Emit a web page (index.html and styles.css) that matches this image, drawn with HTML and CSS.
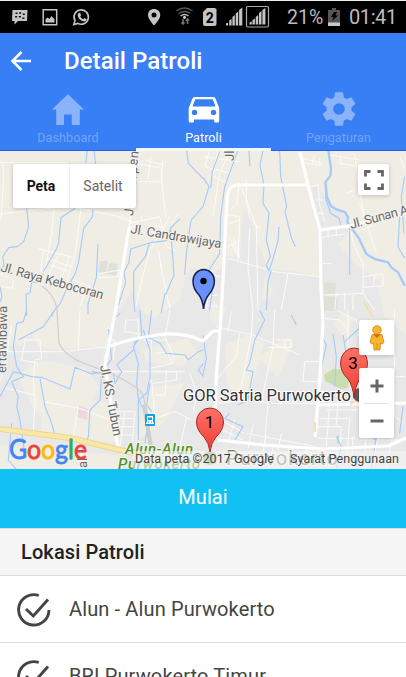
FILE: index.html
```html
<!DOCTYPE html>
<html lang="id">
<head>
<meta charset="utf-8">
<title>Detail Patroli</title>
<link rel="stylesheet" href="styles.css">
</head>
<body>
<div class="app">
  <div class="status">
    <svg class="status-icons" width="280" height="32" viewBox="0 1 280 32">
      <g fill="#c4c4c4">
        <path d="M12.500 10H27.500L27 21H18l-3.500 3.500V21H12Z"/>
        <path fill="none" stroke="#c4c4c4" stroke-width="1.500" d="M43.200 9.700h13.500v15h-13.500z"/>
        <path d="M45.500 22.500v-3l2-2 2 1.500 2-3 3 3.500v3z"/>
        <path fill="none" stroke="#c4c4c4" stroke-width="1.600" d="M73.800 24.500l1.200-3.800a7.200 7.200 0 1 1 2.800 2.700z"/>
        <path d="M78.600 13l1.500-.3 1 2.500-.9 1.200q1 2 3 2.800l1.200-1.200 2.300 1.200q-.5 2.300-2.500 2.300-5.500-1-6.500-6-.1-1.600.9-2.500z"/>
        <path fill-rule="evenodd" d="M154 9c-3.500 0-6 2.600-6 6 0 4.300 6 10.500 6 10.500s6.300-6.200 6.300-10.500c0-3.400-2.700-6-6.300-6zm0 3.500a2.500 2.500 0 1 1 0 5 2.500 2.500 0 0 1 0-5z"/>
        <path d="M207 8h8l1.500 1.500V24a2 2 0 0 1-2 2h-9.500a2 2 0 0 1-2-2V12z"/>
        <path d="M226 25.500v-2l2-1v3zm3.200 0v-5l2.400-1.500v6.500zm3.200 0V17l2.400-2v10.500zm3.300 0v-12l2.500-2v14zm3.400 0V10l3.200-2.500v18z"/>
        <path d="M249.500 24.500v-2l2.300-1v3zm3 0v-4.500l2.400-1.500v6zm3.200 0v-7.500l2.500-2v9.500zm3.300 0V13l2.500-2v13.500zm3.400 0V10l3-2v16.500z"/>
      </g>
      <g fill="#0c0c0c"><path d="M15.500 12.500h2V14h-2zm3.600-.3h2v1.500h-2zm3.700 1.300h2V15h-2zm-7.700 2.500h2v1.500h-2zm3.700 0h2v1.500h-2zm3.600 1.500h2V19h-2z"/></g>
      <rect x="246.500" y="6.500" width="22" height="20.500" rx="1.500" fill="none" stroke="#aaa" stroke-width="1.200"/>
      <g fill="none" stroke-width="1.500"><path stroke="#555" d="M176.500 11q8-6 16 0M178.500 13.500q6-4 12 0"/><path stroke="#bbb" d="M180.500 16q4-3 8 0"/><path stroke="#777" d="M183 19v5m-1.500-1.500l1.500 1.500 1.500-1.500M187.500 24v-5m-1.500 1.500l1.500-1.500 1.500 1.500"/></g>
      <circle cx="184.500" cy="17.500" r="1.400" fill="#ddd"/>
      <text x="205.700" y="22.500" class="sim">2</text>
    </svg>
    <span class="battery-text">21%</span>
    <svg class="battery" width="12" height="18" viewBox="0 0 12 18"><path fill="#555" d="M4 0h4v2h4v16H0V2h4z"/><path fill="#c8c8c8" d="M0 14.500h12V18H0z"/><path fill="#000" d="M6 4h3L7.500 7.500H10L4 13l1.500-4H3z"/></svg>
    <span class="clock">01:41</span>
  </div>
  <header class="header">
    <div class="bar">
      <svg width="22" height="20" viewBox="0 0 22 20" fill="none" stroke="#fff" stroke-width="2.500"><path d="M11.500 1L2.500 10l9 9M2.500 10H21"/></svg>
      <h1>Detail Patroli</h1>
    </div>
    <nav class="tabs">
      <a class="tab"><svg width="34" height="34" viewBox="0 0 34 34" fill="currentColor"><path d="M17 1.300L33 16.500H28.800V32H20.800V21.500H13V32H5.200V16.500H.8z"/></svg><span>Dashboard</span></a>
      <a class="tab active"><svg width="34" height="34" viewBox="0 0 34 34" fill="currentColor"><path fill-rule="evenodd" d="M7.500 4h19q1.500 0 2 1.500L32.200 15v13q0 1.500-1.300 1.500h-2.300q-1.400 0-1.400-1.500v-1.500H7V28q0 1.500-1.400 1.500H3q-1.300 0-1.300-1.500V15L5.500 5.500Q6 4 7.500 4zM8.300 6.300L5.500 13.500h23L25.700 6.300zM7.500 16.700a2.700 2.700 0 1 0 0 5.400 2.700 2.700 0 0 0 0-5.400zm19 0a2.700 2.700 0 1 0 0 5.400 2.700 2.700 0 0 0 0-5.400z"/></svg><span>Patroli</span></a>
      <a class="tab"><svg class="gear" width="40" height="40" viewBox="0 0 24 24" fill="currentColor"><path d="M19.430 12.980c.04-.32.07-.64.07-.98s-.03-.66-.07-.98l2.110-1.650c.19-.15.24-.42.12-.64l-2-3.460c-.12-.22-.39-.3-.61-.22l-2.490 1c-.52-.4-1.080-.73-1.690-.98l-.38-2.650A.49.49 0 0 0 14 2h-4c-.25 0-.46.18-.49.42l-.38 2.650c-.61.25-1.170.59-1.690.98l-2.490-1c-.23-.09-.49 0-.61.22l-2 3.460c-.13.22-.07.49.12.64l2.110 1.650c-.04.32-.07.65-.07.98s.03.66.07.98l-2.110 1.650c-.19.15-.24.42-.12.64l2 3.460c.12.22.39.3.61.22l2.490-1c.52.4 1.080.73 1.690.98l.38 2.650c.03.24.24.42.49.42h4c.25 0 .46-.18.49-.42l.38-2.650c.61-.25 1.170-.59 1.690-.98l2.490 1c.23.09.49 0 .61-.22l2-3.460c.12-.22.07-.49-.12-.64zM12 15.500a3.500 3.500 0 1 1 0-7 3.500 3.500 0 0 1 0 7z"/></svg><span>Pengaturan</span></a>
    </nav>
  </header>
  <main>
    <section class="map">
      <svg class="canvas" width="406" height="318" viewBox="0 151 406 318">
        <rect y="151" width="406" height="318" fill="#f0ede5"/>
        <!-- built-up areas -->
        <g fill="#e8e8e8">
          <path d="M186 276L194 266L206 276L222 268L225 256L240 258L243 212L250 215L258 245L268 268L290 271L319 276L318 235L311 188L317 186L330 203L348 213L350 228L338 245L354 262L380 282L384 300L406 310V469H0V342L22 345L45 312L72 315L85 345L105 350L115 315L133 290L142 312L155 318L180 300Z"/>
        </g>
        <g fill="#f0ede5">
          <path d="M22 312l75 0 9 8-3 25-40 5-25-3zM17 375l25-15 43 8 15 20-20 30-45-6zM40 410l30-12 50 5-3 40-75-10zM142 350l45-12 13 18-20 10-34-5zM150 388l34-5-20 40-30 20zM225 345l22-10 18 5-18 65-20-20zM258 357l30-20 5 8-15 33zM265 275l8 15-3 10h-8zM210 300l16 8-6 20-10-8zM333 325l8-12 11 5-5 22zM378 285l28 10v40l-22-18zM0 445l50 5 70 5v14H0z"/>
        </g>
        <path fill="#dfe1d8" d="M100 261l8 0-2 13-8-2zM109 263l9 1-2 12-9-2zM324 282l12 1-1 11h-11zM324 296l14 1v14h-14z"/>
        <path fill="#cbdcae" d="M324 375l9-6 17 1-2 18-7 1-16-8z"/>
        <path fill="#edd8df" d="M79 405l9 4-1 11-10-3z"/>
        <!-- minor roads, upper left -->
        <g transform="translate(0 150) scale(.33333)" class="minor">
          <path d="M0 192l205-24 180 38M10 40v70l-8 100M0 38h200M165 150l-10 100-22 120M246 150l-20 160-35 115M115 296l100 25M140 325l75 25M150 345l55 18M208 318l-30 90M178 310l-35 72M130 300l-8 65M410 40l75 15v40h-75M452 22l-8 66M488 30l-3 60 12 110M435 30l55 15M390 220l90-20M510 200l-60 100-20 70-25 110M480 205l20 85M465 225l30 12M500 290l28 12M480 340l30 135M475 300l10 55M355 205l60 15-25 15M425 200l0 15M535 190l-20 30M0 370l40 20-3 25-32-5M235 410l15 30-10 30M220 390l55 22M300 370l60-10-5 20-60 3"/>
        </g>
        <g transform="translate(203 150) scale(.33333)" class="minor">
          <path d="M0 20l110 15M20 0L5 50l80 20M45 0l-15 80 45 20M80 5l-30 65-20 130M115 110l45 120M108 105l-8 60-20 15M130 90l0 55 10 60 30 30M75 195l35 5-5 130M80 220l30-10M75 290l35-20M80 265l25 55M90 262l20 60M75 325l140 40 135 15M140 235l-5 120 15 125M160 230l5 250M255 370l-20 110M300 25l60 15M333 18l-5 25M350 25v20M305 40l50 5M380 15l90 15M412 12v28l62 10M455 10l15 120 20 90 30 90M432 130l20-10M325 110l20-5 5 60 15 50M340 150h20M345 190h18M350 235l85-3M355 262l70-10M375 235v28M400 230v28M470 160l20 60M480 240l30-15M445 245l5 35 30 60v90l-115 5M350 340h35M480 380l60-8 0 35-58 5M515 375l-5 38M425 430v50M450 435v45M480 430l35 50M590 20l15 40M400 430l-5 50M0 440l45-5M0 465l45 5M20 410l-10 70M50 380l-25-5"/>
        </g>
        <g transform="translate(0 310) scale(.33333)" class="minor">
          <path d="M0 125h185l140-15 0-60M240 0l-5 120M75 90h45l5 55-20 5-5 60 5 65-5 90M75 90l-10 60 50 10M20 235l85 20M35 45l-20 120-15 50M130 275l110 20 115 45M235 290l-20 120M330 185h225M320 90l25 0-5 60M345 95l-35 50M380 30h35v60M378 30l-5 35 70 10M430 90l70 0M455 80l-10 180M510 0l-15 80 30 70M470 130l30-5 20 35-70 15M470 185h60v25l-70 10M500 180l-5 75-30 0M455 210l10 110M465 325l60-20 50 25M355 305h50l-8 90M350 325h55M355 350h50M360 375h45M375 305l-15 105M560 320l-20 90 40 20M570 190l20 60-10 60M245 410l-5 70"/>
        </g>
        <g transform="translate(203 310) scale(.33333)" class="minor">
          <path d="M40 50l110 25 140 60M150 0l-5 75M85 5L75 65M110 70l-10 70-60 70M145 75l-25 130-15 65M220 90h45v22h-70M245 90v20M215 0l-5 110-35 165M360 25l50 5 25 30M435 0v110M305 155h50v60h-55zM150 265l45 15-10 120M45 325l80 45M40 350l80 40M95 330l-20 70M130 370l210 40M150 345l-15 70M190 375l-10 50M235 370l-10 50M45 280l140-15M205 280h140M335 350h80l-5 80M350 325h90l-8 110M380 280l-10 130M345 385h110M405 270l-5 75M370 300h95M450 380l-5 95M490 380l-10 95M525 385l-20 90M570 370l-20 105M470 390h135M575 0v320l30 20M575 200h31M400 0l60 30 10 60M210 410l-10 65M260 415l-20 60M310 410v65"/>
        </g>
        <!-- waterways -->
        <g transform="translate(0 150) scale(.33333)" class="water">
          <path d="M262 0l-5 40M282 0l6 55M80 175l6 55-15 45-20 15-25 3-18 28 5 25-13 15M225 175l-42 28-7 75-6 18-20 35-20 35M278 180v20l-27 35-15 100-10 35-25 45-20 45-25 30v10M294 282l-5 100-25 80v30M130 370l-10 25-25 3-5 30-12 5 2 65M0 410l6 30-6 15M560 0l5 40 44 45M609 170l-35 40-5 25-10 75-5 65M540 206l-28 28 10 140-25 60M355 467l22-70-5-30 15-30 5-40 63-20 45-5 12-35M448 280l-12 40-35 45v80l4 40M495 430l-12 60"/>
        </g>
        <g transform="translate(203 150) scale(.33333)" class="water">
          <path d="M0 170l18-60-18-28M50 5l-22 60-5 50M105 0L65 110l-12 90-3 110-50 80M138 0l3 50M180 0l-9 45 12 60-3 55 18 30-8 80 12 50-12 25 7 18 8-20 20-70 3-42M205 360l-10 35-5 85M230 0l3 80 18 90-5 15 18 75 13 30M440 235v140M590 200l-5 90 20 35M30 410l-10 70M605 80l-10 60 8 110"/>
          <path class="wide" d="M376 0l8 55-2 22-15 20 5 45 12 27 18 10 25 8 8 15-2 15 33 45 24 50 25 15 40 10 10 15 20 15 20 40"/>
          <path d="M368 105l0 40 15 45 25 15 5 20"/>
        </g>
        <g transform="translate(0 310) scale(.33333)" class="water">
          <path d="M80 0l-10 35-20 5-10 70 10 60 20 30-35 15 20 45-5 30 10 40 12 85M165 0l-35 50-75 40M0 260l40-75 55 15 30 2 85 35 15-65 50 20 30-5 30-40-10-90M275 185l30 5-5 80-30 30-5 80-20 40M120 205l15 85 20 50 10 35M340 190l5 30 20-35-15-20 50-45 5-25 10-5M420 0l5 75-25 35 15 50-5 60 5 45 30 65-10 70M350 20l10-10M455 0l-10 85M430 75l50 25 20 30 55 5 10 15 30-25 15-5M430 60l20 60 0 80-10 50-25 20 0 120M450 220l-10 65 15 20M35 340l-10 110 30 35M610 160l-15 20 15 20"/>
        </g>
        <g transform="translate(203 310) scale(.33333)" class="water">
          <path d="M170 0l15 30-30 60-15 70-10 20 20 5-15 85-30 15M265 15l15 30M0 75l10 70-10 50M80 310l-15 15 55 25-30 50M350 195l20-90-15-30 10-50M390 70l10 70-5 90M420 75l15 90M475 50l-50 45M400 380l15 30-15 65M520 380l-15 95M600 290l-10 80M405 375v25M510 370l5 20"/>
        </g>
        <!-- railway -->
        <path fill="none" stroke="#cecece" stroke-width="1.200" d="M42 286q13 9 15 24l2 33q7 15 30 22l25 10q25 12 29 20l4 17 5 38"/>
        <path fill="none" stroke="#cfcfcf" stroke-width="4" d="M144 405l7 42"/>
        <!-- main roads -->
        <g class="major">
          <path d="M129 228l-12 74-12 63M105 365l13 82M107 347q25-9 50-12 25-4 46 6l10-10M213 331h7l3-50 4-82q1-13 9-14h72M220 330l-4 50-1 58M300 152l8 33 12 45 1 60 2 30-3 57-5 60M320 230l35-5 51-13M317 405l89-2M218 440l45 5 60 4 65-3 18-8"/>
        </g>
        <path fill="none" stroke="#fff" stroke-width="1.500" d="M137 152l-3 40-5 36"/>
        <path fill="none" stroke="#efd68c" stroke-width="6" d="M0 429l70 9 50 12 40 9 40 5"/>
        <path fill="none" stroke="#f9e8aa" stroke-width="4" d="M0 429l70 9 50 12 40 9 40 5"/>
        <path fill="none" stroke="#f8ddb0" stroke-width="2" d="M363 301l10 16M315 422v10M350 405l10-8"/>
        <g class="road-label">
          <text transform="translate(130 233) rotate(9.500)" textLength="92">Jl. Candrawijaya</text>
          <text transform="translate(0 271) rotate(15.500)" textLength="106">Jl. Raya Kebocoran</text>
          <text transform="translate(351 229) rotate(-15)" textLength="60">Jl. Sunan A</text>
          <text transform="translate(100 366) rotate(79)" textLength="72">Jl. KS. Tubun</text>
          <text transform="translate(133 216) rotate(-85)" textLength="65">Jl. Gerpen</text>
          <text transform="translate(6 373) rotate(-89)" textLength="67">ertawibawa</text>
          <text transform="translate(234 161) rotate(-90)">Jl.</text>
          <text transform="translate(87 468) rotate(-90)">al</text>
        </g>
        <g class="park"><text x="125" y="454" textLength="68">Alun-Alun</text><text x="118" y="469" textLength="82">Purwokerto</text></g>
        <text class="city" x="226" y="465" textLength="112">Purwokerto</text>
        <rect x="145" y="414" width="10" height="12" rx="1" fill="#13a2ec"/><path fill="#fff" d="M147 416h6v6.500h1v1.500h-8v-1.500h1z"/><path fill="#13a2ec" d="M148 417.500h4v2.500h-4zM148 421.500h1v1h-1zM151 421.500h1v1h-1z"/>
        <circle cx="210" cy="458" r="7" fill="#91b779"/>
        <rect x="133" y="451" width="273" height="18" fill="#f5f5f5" opacity=".6"/>
        <circle cx="360" cy="395" r="7" fill="#6d5750"/>
        <text class="place" x="183" y="400.500" textLength="168">GOR Satria Purwokerto</text>
        <path fill="#6991fd" stroke="#17234b" stroke-width="1.500" d="M203.500 309q-.7-9-4.500-14-6-6-6-14a10.700 11.500 0 0 1 21.400 0q0 7-5.900 14-4 5-5 14z"/><circle cx="203.500" cy="281" r="3.200" fill="#000"/>
        <g fill="url(#pin)" stroke="#a42b27" stroke-width="1"><path d="M210 452q-1-9-6-15-7.500-7-7.500-15a13.500 14 0 0 1 27 0q0 8-7.500 15-5 6-6 15z"/><path d="M354 398q-1-12-6-19-7.500-7-7.500-16a13.500 15 0 0 1 27 0q0 9-7.500 16-5 7-6 19z"/></g>
        <defs><linearGradient id="pin" x2="0" y2="1"><stop stop-color="#ff7367"/><stop offset="1" stop-color="#ed3b34"/></linearGradient></defs>
        <g class="number"><text x="209.500" y="427.500">1</text><text x="353" y="368.500">3</text></g>
        <text class="google" x="9" y="459" textLength="78" lengthAdjust="spacingAndGlyphs"><tspan fill="#4285f4" stroke="#4285f4">G</tspan><tspan fill="#ea4335" stroke="#ea4335">o</tspan><tspan fill="#fbbc05" stroke="#fbbc05">o</tspan><tspan fill="#4285f4" stroke="#4285f4">g</tspan><tspan fill="#34a853" stroke="#34a853">l</tspan><tspan fill="#ea4335" stroke="#ea4335">e</tspan></text>
        <g class="legal"><text x="135" y="462.500" textLength="139">Data peta ©2017 Google</text><text x="290" y="462.500" textLength="109">Syarat Penggunaan</text></g>
      </svg>
      <div class="type-switch"><button class="on">Peta</button><button>Satelit</button></div>
      <button class="ctl full"><svg width="20" height="20" viewBox="0 0 20 20" fill="none" stroke="#666" stroke-width="2.800"><path d="M1.500 6.500V1.500H6.500M13.500 1.500h5V6.500M18.500 13.500v5H13.500M6.500 18.500H1.500V13.500"/></svg></button>
      <button class="ctl pegman"><svg width="16" height="26" viewBox="0 0 16 26" fill="#f9b52b" stroke="#c98513" stroke-width=".8"><path d="M3 9.500h10l2 8-2 1.500-1.500-1-.5 7H5l-.5-7L3 19l-2-1.500z"/><circle cx="8" cy="5" r="4.300"/><path fill="#e55b22" stroke="none" d="M4.500 9.500h7L8 13z"/><path d="M8 18v6"/></svg></button>
      <div class="ctl zoom"><button><svg width="14" height="14" viewBox="0 0 14 14" stroke="#666" stroke-width="3"><path d="M7 .5v13M.5 7h13"/></svg></button><button><svg width="14" height="14" viewBox="0 0 14 14" stroke="#666" stroke-width="3"><path d="M.5 7h13"/></svg></button></div>
    </section>
    <button class="start">Mulai</button>
    <h2>Lokasi Patroli</h2>
    <ul>
      <li><svg width="34" height="36" viewBox="0 0 34 36" fill="none" stroke="#444" stroke-width="2.900"><path d="M21.800 3.500A15.200 15.200 0 1 0 32 18M9 17l7.300 7L31 7.500"/></svg><span>Alun - Alun Purwokerto</span></li>
      <li><svg width="34" height="36" viewBox="0 0 34 36" fill="none" stroke="#444" stroke-width="2.900"><path d="M21.800 3.500A15.200 15.200 0 1 0 32 18M9 17l7.300 7L31 7.500"/></svg><span>BRI Purwokerto Timur</span></li>
    </ul>
  </main>
</div>
</body>
</html>
```
FILE: styles.css
```css
* { box-sizing: border-box; }
body { margin: 0; background: #fff; font-family: Roboto, sans-serif; }
button { border: 0; padding: 0; background: none; font-family: inherit; }
svg { display: block; flex-shrink: 0; }
.app { width: 406px; height: 677px; overflow: hidden; }
.status { height: 33px; border-top: 1px solid #e8eeee; background: #000; color: #bcbcbc; display: flex; align-items: center; font-size: 20px; white-space: nowrap; }
.battery-text { width: 41px; margin-left: 7px; font-size: 19.5px; }
.clock { margin-left: 9px; letter-spacing: -.4px; }
.sim { font: bold 14px Roboto, sans-serif; fill: #000; }
.header { height: 118px; background: #387ef5; border-bottom: 1px solid #1b63f0; }
.bar { height: 56px; display: flex; align-items: center; padding-left: 10px; }
h1 { margin: 0 0 1px 32px; color: #fff; font-size: 24px; line-height: 30px; font-weight: 500; letter-spacing: .05px; }
.tabs { height: 62px; display: grid; grid-template-columns: 136px 135px 135px; }
.tab { display: flex; flex-direction: column; align-items: center; color: #8bb3fa; padding-top: 3.5px; height: 62px; font-size: 12.5px; letter-spacing: .1px; }
.tab span { line-height: 15px; margin-top: 3px; color: #75a5f8; }
.tab.active { color: #fff; border-bottom: 3px solid #f2f8ff; }
.tab.active span { color: #fff; }
.gear { margin: -4px 0 -2px; }
.map { position: relative; height: 318px; overflow: hidden; }
.minor, .water, .major { fill: none; stroke-linejoin: round; }
.minor { stroke: #fcfbf8; stroke-width: 3; }
.water { stroke: #a6cbf9; stroke-width: 3.4; }
.wide { stroke-width: 7; }
.major { stroke: #fff; stroke-width: 3.2; }
.road-label { font: 13px Roboto, sans-serif; fill: #696969; stroke: #f5f3ee; stroke-width: 2px; paint-order: stroke; }
.park { font: italic 500 15px Roboto, sans-serif; fill: #559029; stroke: #f3f3eb; stroke-width: 2px; paint-order: stroke; }
.city { font: 20px Roboto, sans-serif; fill: #777251; stroke: #fff; stroke-width: 2px; paint-order: stroke; }
.place { font: 16.5px Roboto, sans-serif; fill: #333; stroke: #fff; stroke-width: 2px; paint-order: stroke; }
.number { font: 17px Roboto, sans-serif; fill: #000; text-anchor: middle; }
.google { font: 400 27px Lato, sans-serif; stroke-width: .8px; }
.legal { font: 12.5px Roboto, sans-serif; fill: #444; }
.type-switch { position: absolute; left: 13px; top: 13px; width: 123px; height: 44px; display: grid; grid-template-columns: 56px 67px; background: #fff; box-shadow: 0 1px 4px #0003; border-radius: 2px; }
.type-switch button { font-size: 14px; color: #666; border-left: 1px solid #eee; }
.type-switch .on { font-weight: 700; color: #111; border: 0; }
.ctl { position: absolute; background: #fff; border-radius: 2px; box-shadow: 0 1px 4px #0003; display: flex; align-items: center; justify-content: center; }
.full { left: 358px; top: 13px; width: 31px; height: 31px; }
.pegman { left: 359px; top: 169px; width: 35px; height: 35px; }
.zoom { left: 359px; top: 217px; width: 35px; height: 70px; flex-direction: column; }
.zoom button { width: 25px; height: 35px; display: flex; align-items: center; justify-content: center; }
.zoom button + button { border-top: 1px solid #e2e2e2; }
.start { display: block; width: 406px; height: 59px; background: #11c1f3; color: #fff; font-size: 20px; padding-bottom: 3px; letter-spacing: .1px; }
h2 { margin: 0; height: 48px; padding-left: 21px; border-top: 1px solid #ddd; border-bottom: 1px solid #ddd; background: #f5f5f5; color: #222; font-size: 20px; line-height: 46px; font-weight: 500; letter-spacing: .1px; }
ul { list-style: none; margin: 0; padding: 0; }
li { height: 67px; padding-left: 17px; border-bottom: 1px solid #ddd; display: flex; align-items: center; gap: 18px; color: #444; font-size: 20px; letter-spacing: .13px; }
li svg { margin-top: 1px; }
```
